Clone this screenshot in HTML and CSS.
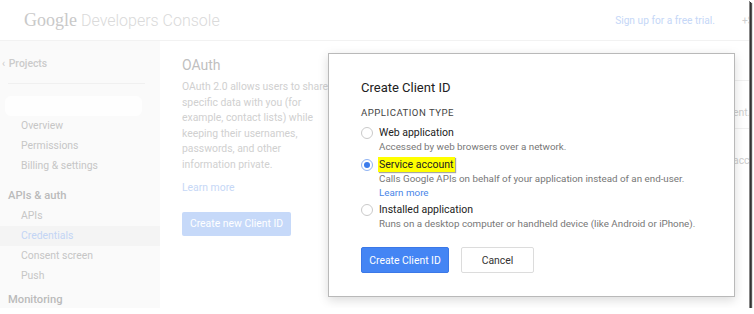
FILE: index.html
```html
<!DOCTYPE html>
<html lang="en">
<head>
    <meta charset="UTF-8">
    <title>Google Developers Console - Credentials</title>
    <link rel="stylesheet" href="styles.css">
</head>
<body>
    <div class="frame">
        <header class="topbar">
            <div class="logo"><span class="logo-google">Google</span> <span class="logo-product">Developers Console</span></div>
            <a class="signup">Sign up for a free trial.</a>
            <span class="user">+S</span>
        </header>

        <div class="layout">
            <aside class="sidebar">
                <div class="projects-link"><span class="chev">‹</span> Projects</div>
                <div class="divider"></div>
                <div class="project-select"></div>
                <ul class="nav">
                    <li>Overview</li>
                    <li>Permissions</li>
                    <li>Billing &amp; settings</li>
                    <li class="nav-group">APIs &amp; auth</li>
                    <li>APIs</li>
                    <li class="active">Credentials</li>
                    <li>Consent screen</li>
                    <li>Push</li>
                    <li class="nav-group">Monitoring</li>
                </ul>
            </aside>

            <main class="content">
                <section class="oauth">
                    <h2>OAuth</h2>
                    <p>OAuth 2.0 allows users to share specific data with you (for example, contact lists) while keeping their usernames, passwords, and other information private.</p>
                    <a class="learn">Learn more</a>
                    <button class="btn-faded">Create new Client ID</button>
                </section>
                <section class="clients">
                    <div class="client-row">ent.com</div>
                    <div class="client-row">account</div>
                </section>
            </main>
        </div>

        <div class="modal">
            <h3>Create Client ID</h3>
            <div class="field-label">APPLICATION TYPE</div>
            <div class="options">
                <div class="option">
                    <span class="radio"></span>
                    <div>
                        <div class="opt-name">Web application</div>
                        <div class="opt-desc">Accessed by web browsers over a network.</div>
                    </div>
                </div>
                <div class="option">
                    <span class="radio checked"></span>
                    <div>
                        <div class="opt-name"><span class="mark">Service account</span></div>
                        <div class="opt-desc">Calls Google APIs on behalf of your application instead of an end-user.</div>
                        <a class="opt-link">Learn more</a>
                    </div>
                </div>
                <div class="option">
                    <span class="radio"></span>
                    <div>
                        <div class="opt-name">Installed application</div>
                        <div class="opt-desc">Runs on a desktop computer or handheld device (like Android or iPhone).</div>
                    </div>
                </div>
            </div>
            <div class="actions">
                <button class="btn-primary">Create Client ID</button>
                <button class="btn-cancel">Cancel</button>
            </div>
        </div>
    </div>
</body>
</html>
```

FILE: styles.css
```css
body {
    margin: 0;
    background-color: white;
    font-family: Roboto, "Liberation Sans", Arial, sans-serif;
}

.frame {
    position: relative;
    width: 749px;
    height: 308px;
    overflow: hidden;
    background-color: white;
    box-shadow: 1px 1px 0 #888, 2px 2px 0 #333, 3px 3px 1px #555;
}

/* top bar */
.topbar {
    display: flex;
    align-items: center;
    height: 40px;
    padding-left: 24px;
    border-bottom: 1px solid #f2f2f2;
}

.logo {
    white-space: nowrap;
}

.logo-google {
    font-family: "Liberation Serif", serif;
    font-size: 18px;
    color: #c9c9c9;
}

.logo-product {
    font-size: 16px;
    font-weight: 300;
    color: #dadada;
}

.signup {
    margin-left: auto;
    font-size: 10.2px;
    color: #c5d7f7;
}

.user {
    width: 7px;
    margin-left: 27px;
    font-size: 10.2px;
    color: #cfcfcf;
    white-space: nowrap;
}

.layout {
    display: flex;
    height: 267px;
}

/* sidebar */
.sidebar {
    width: 160px;
    background-color: #fafafa;
    padding-top: 16px;
}

.projects-link {
    line-height: 14px;
    font-size: 10.4px;
    font-weight: 500;
    color: #cbcbcb;
    padding-left: 2px;
}

.chev {
    font-weight: 400;
    margin-right: 1px;
}

.divider {
    margin: 12px 15px 0 8px;
    border-top: 1px solid #f0f0f0;
}

.project-select {
    height: 20px;
    margin: 12px 18px 0 5px;
    background-color: #fefefe;
    border-radius: 6px;
}

.nav {
    list-style: none;
    margin: 0;
    padding: 0;
}

.nav li {
    line-height: 20px;
    font-size: 10.4px;
    color: #c6c6c6;
    padding-left: 21px;
}

.nav li.nav-group {
    margin-top: 10px;
    padding-left: 8px;
    font-size: 11.2px;
    font-weight: 500;
    color: #bababa;
}

.nav li.nav-group:last-child {
    margin-top: 4px;
}

.nav li.active {
    background-color: #f4f4f4;
    color: #c3d5f5;
}

/* main content */
.content {
    flex: 1;
    display: flex;
}

.oauth {
    width: 150px;
    padding: 15px 0 0 22px;
}

.oauth h2 {
    margin: 0;
    font-size: 14px;
    line-height: 18px;
    font-weight: 400;
    color: #bfbfbf;
}

.oauth p {
    margin: 5px 0 0;
    font-size: 10.4px;
    line-height: 15.5px;
    color: #d0d0d0;
}

.learn {
    display: block;
    margin-top: 8px;
    font-size: 10.4px;
    line-height: 15.5px;
    color: #c6d7f6;
}

.btn-faded {
    margin-top: 16px;
    width: 109px;
    height: 24px;
    border: none;
    border-radius: 2px;
    background-color: #c6d9f9;
    color: white;
    font-family: inherit;
    font-size: 10.4px;
    padding: 0;
}

.clients {
    margin-left: auto;
    width: 16px;
    padding-top: 39px;
}

.client-row {
    height: 48px;
    border-top: 1px solid #f0f0f0;
    padding-top: 25px;
    box-sizing: border-box;
    font-size: 10.4px;
    color: #cdcdcd;
    white-space: nowrap;
}

/* dialog */
.modal {
    position: absolute;
    left: 328px;
    top: 53px;
    width: 407px;
    height: 244px;
    box-sizing: border-box;
    padding: 26px 0 0 32px;
    background-color: white;
    border: 1px solid #b9b9b9;
    box-shadow: 0 3px 10px rgba(0, 0, 0, 0.15);
}

.modal h3 {
    margin: 0;
    font-size: 13px;
    line-height: 16px;
    font-weight: 400;
    color: #222;
}

.field-label {
    margin-top: 10px;
    font-size: 9.6px;
    line-height: 14px;
    letter-spacing: 0.5px;
    color: #444;
}

.options {
    margin-top: 6px;
    display: flex;
    flex-direction: column;
    gap: 4px;
}

.option {
    display: flex;
    gap: 6px;
    align-items: flex-start;
}

.radio {
    flex: none;
    position: relative;
    width: 12px;
    height: 12px;
    margin-top: 1px;
    box-sizing: border-box;
    border: 1px solid #cacaca;
    border-radius: 50%;
}

.radio.checked {
    border-color: #8fb3f3;
}

.radio.checked::after {
    content: "";
    position: absolute;
    left: 2px;
    top: 2px;
    width: 6px;
    height: 6px;
    border-radius: 50%;
    background-color: #3b7cec;
}

.opt-name {
    font-size: 10.5px;
    line-height: 14px;
    color: #222;
}

.mark {
    background-color: #ffff00;
    padding: 1px 2px 1px 1px;
    margin-left: -1px;
    box-shadow: 1px 1px 1px rgba(0, 0, 0, 0.35);
}

.opt-desc {
    font-size: 9.8px;
    line-height: 14px;
    color: #777;
}

.opt-link {
    display: block;
    font-size: 9.8px;
    line-height: 13px;
    color: #4a86e8;
}

.actions {
    display: flex;
    gap: 12px;
    margin-top: 16px;
}

.actions button {
    height: 26px;
    padding: 0;
    border-radius: 2px;
    font-family: inherit;
    font-size: 10.4px;
}

.btn-primary {
    width: 88px;
    border: 1px solid #3b78e7;
    background-color: #4485f4;
    color: white;
}

.btn-cancel {
    width: 73px;
    border: 1px solid #dcdcdc;
    background-color: white;
    color: #333;
}
```
